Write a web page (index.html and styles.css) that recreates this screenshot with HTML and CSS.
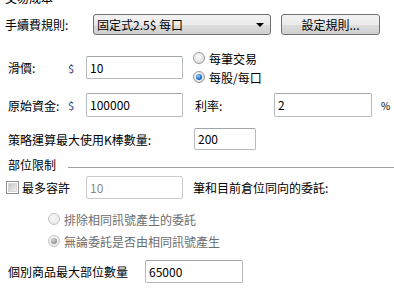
FILE: index.html
```html
<!DOCTYPE html>
<html lang="zh-Hant">
<head>
<meta charset="utf-8">
<link rel="stylesheet" href="styles.css">
</head>
<body>
<div class="page">
  <div class="top-cut"><span>交易成本</span></div>

  <div class="row row-fee">
    <span class="lbl lbl-fee">手續費規則:</span>
    <div class="select"><span class="select-text">固定式2.5$ 每口</span><span class="arrow"></span></div>
    <div class="btn">設定規則...</div>
  </div>

  <div class="row row-slip">
    <span class="lbl lbl-short">滑價:</span>
    <span class="dollar">$</span>
    <div class="input w97">10</div>
    <div class="radio-group">
      <div class="radio-item"><span class="radio"></span><span>每筆交易</span></div>
      <div class="radio-item"><span class="radio checked"></span><span>每股/每口</span></div>
    </div>
  </div>

  <div class="row row-cap">
    <span class="lbl lbl-short">原始資金:</span>
    <span class="dollar">$</span>
    <div class="input w97">100000</div>
    <span class="lbl-rate">利率:</span>
    <div class="input w98">2</div>
    <span class="pct">%</span>
  </div>

  <div class="row row-k">
    <span class="lbl lbl-k">策略運算最大使用K棒數量:</span>
    <div class="input w62">200</div>
  </div>

  <div class="row row-section">
    <span class="section-title">部位限制</span>
    <span class="section-line"></span>
  </div>

  <div class="row row-max">
    <div class="check-wrap"><span class="checkbox"></span><span>最多容許</span></div>
    <div class="input w97 disabled">10</div>
    <span class="after-text">筆和目前倉位同向的委託:</span>
  </div>

  <div class="sub-radios">
    <div class="radio-item dis"><span class="radio disabled"></span><span>排除相同訊號產生的委託</span></div>
    <div class="radio-item dis"><span class="radio disabled checked"></span><span>無論委託是否由相同訊號產生</span></div>
  </div>

  <div class="row row-last">
    <span class="lbl lbl-last">個別商品最大部位數量</span>
    <div class="input w98">65000</div>
  </div>
</div>
</body>
</html>
```

FILE: styles.css
```css
html, body {
  margin: 0;
  padding: 0;
  background: #ffffff;
}
body {
  width: 394px;
  height: 292px;
  overflow: hidden;
  font-family: "Noto Sans CJK TC", "Noto Sans", sans-serif;
  font-size: 12px;
  color: #000;
}
.page {
  display: flex;
  flex-direction: column;
}
.top-cut {
  height: 4px;
  overflow: hidden;
  display: flex;
  align-items: flex-end;
  padding-left: 5px;
  line-height: 12px;
}
.row {
  display: flex;
  align-items: center;
}
.lbl {
  white-space: nowrap;
}
.row-fee {
  margin-top: 10px;
  height: 21px;
  padding-left: 5px;
}
.lbl-fee { width: 88px; }
.select {
  box-sizing: border-box;
  width: 178px;
  height: 21px;
  border: 1px solid #707070;
  border-radius: 3px;
  background: linear-gradient(#f2f2f2 0%, #ebebeb 50%, #dddddd 51%, #cfcfcf 100%);
  display: flex;
  align-items: center;
  padding-left: 3px;
  padding-right: 6px;
}
.select-text { flex: 1; }
.arrow {
  width: 0;
  height: 0;
  border-left: 4px solid transparent;
  border-right: 4px solid transparent;
  border-top: 4px solid #000;
}
.btn {
  box-sizing: border-box;
  margin-left: 10px;
  width: 99px;
  height: 21px;
  border: 1px solid #707070;
  border-radius: 3px;
  background: linear-gradient(#f2f2f2 0%, #ebebeb 50%, #dddddd 51%, #cfcfcf 100%);
  display: flex;
  align-items: center;
  justify-content: center;
}
.row-slip {
  margin-top: 21px;
  height: 23px;
  padding-left: 8px;
}
.lbl-short { width: 60px; }
.dollar {
  width: 18px;
  color: #1c3f80;
  font-size: 11px;
}
.input {
  box-sizing: border-box;
  height: 23px;
  border: 1px solid #b5b9c0;
  border-top-color: #a0a4ab;
  border-radius: 2px;
  background: #fff;
  padding-left: 3px;
  display: flex;
  align-items: center;
  line-height: 1;
}
.input.disabled {
  color: #8a8a8a;
  border-color: #c9cbd0;
}
.w97 { width: 97px; }
.w98 { width: 98px; }
.w62 { width: 62px; height: 22px; }
.radio-group {
  margin-left: 10px;
  display: flex;
  flex-direction: column;
  gap: 5px;
}
.radio-item {
  display: flex;
  align-items: center;
  height: 14px;
  white-space: nowrap;
}
.radio-item.dis { color: #6d6d6d; }
.radio {
  box-sizing: border-box;
  width: 12px;
  height: 12px;
  border-radius: 50%;
  border: 1px solid #9a9a9a;
  background: radial-gradient(circle at 40% 35%, #fdfdfd, #d3d3d3);
  margin-right: 4px;
  display: flex;
  align-items: center;
  justify-content: center;
}
.radio.checked::after {
  content: "";
  width: 6px;
  height: 6px;
  border-radius: 50%;
  background: radial-gradient(circle at 40% 35%, #a8dcff 0%, #1a6fd0 55%, #0b3f86 100%);
}
.radio.disabled {
  border-color: #c4c4c4;
  background: radial-gradient(circle at 40% 35%, #f8f8f8, #e4e4e4);
}
.radio.disabled.checked::after {
  background: radial-gradient(circle at 40% 35%, #d8d8d8 0%, #9a9a9a 60%, #7d7d7d 100%);
}
.row-cap {
  margin-top: 14px;
  height: 24px;
  padding-left: 8px;
}
.row-cap .input { height: 24px; }
.lbl-rate {
  margin-left: 12px;
  width: 79px;
}
.pct {
  margin-left: 9px;
  font-size: 10px;
}
.row-k {
  margin-top: 11px;
  height: 22px;
  padding-left: 8px;
}
.lbl-k { width: 186px; }
.row-section {
  margin-top: 7px;
  height: 14px;
  padding-left: 8px;
}
.section-title { white-space: nowrap; }
.section-line {
  flex: 1;
  height: 1px;
  background: #a0a0a0;
  margin-left: 12px;
  margin-top: 6px;
}
.row-max {
  margin-top: 5px;
  height: 23px;
  padding-left: 6px;
}
.check-wrap {
  width: 80px;
  display: flex;
  align-items: center;
}
.checkbox {
  box-sizing: border-box;
  width: 13px;
  height: 13px;
  border: 1px solid #8e8f8f;
  background: #fff;
  margin-right: 3px;
  display: flex;
  align-items: center;
  justify-content: center;
}
.checkbox::after {
  content: "";
  width: 7px;
  height: 7px;
  background: linear-gradient(135deg, #c6c6c6, #efefef);
  border: 1px solid #d6d6d6;
}
.after-text {
  margin-left: 10px;
  white-space: nowrap;
}
.sub-radios {
  margin-top: 13px;
  padding-left: 48px;
  display: flex;
  flex-direction: column;
  gap: 8px;
}
.row-last {
  margin-top: 12px;
  height: 23px;
  padding-left: 8px;
}
.lbl-last { width: 137px; }
```
